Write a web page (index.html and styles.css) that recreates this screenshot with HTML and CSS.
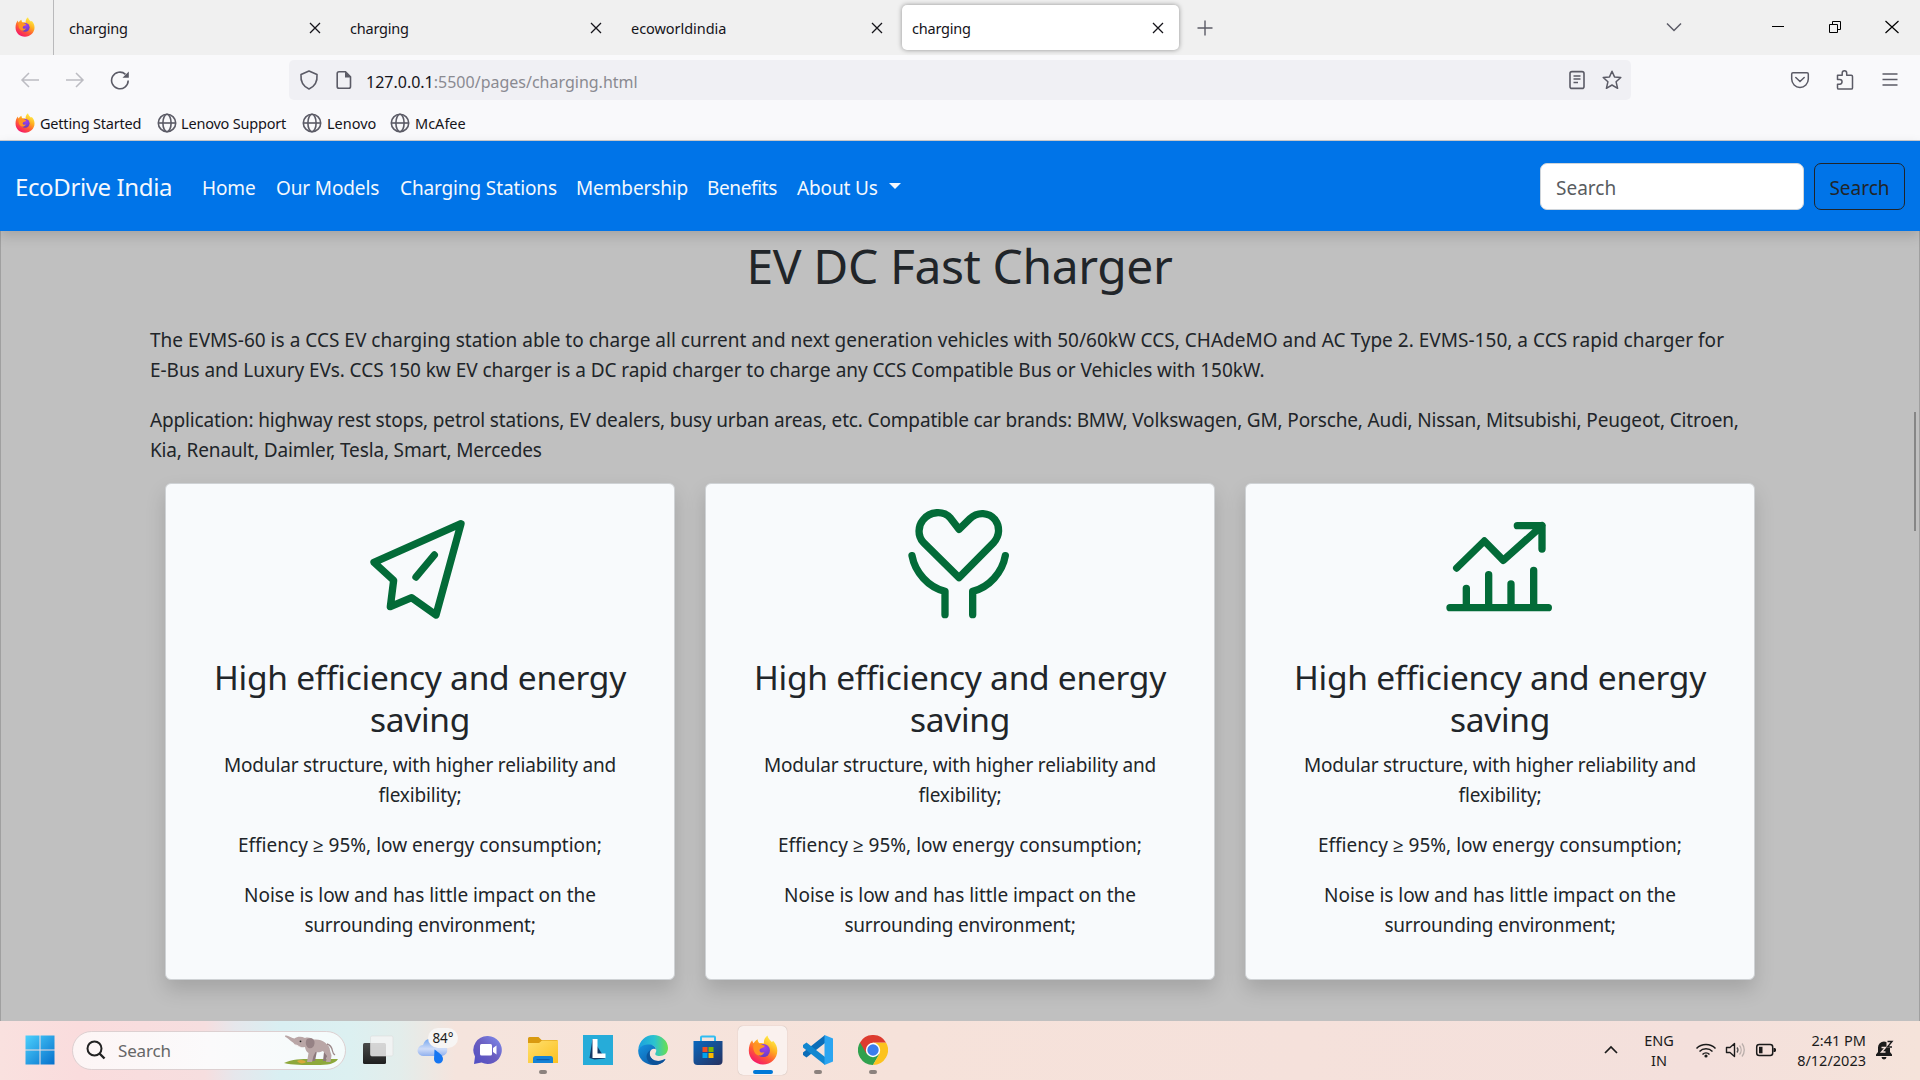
FILE: index.html
```html
<!DOCTYPE html>
<html lang="en">
<head>
<meta charset="utf-8">
<title>charging</title>
<link rel="stylesheet" href="styles.css">
</head>
<body>
<svg class="defs" width="0" height="0" aria-hidden="true">
  <defs>
    <linearGradient id="fx-body" x1="0.85" y1="0.1" x2="0.3" y2="1"><stop offset="0" stop-color="#fff04a"/><stop offset=".35" stop-color="#ffae1f"/><stop offset=".65" stop-color="#ff5a36"/><stop offset="1" stop-color="#f5156c"/></linearGradient>
    <radialGradient id="fx-core" cx=".6" cy=".3" r=".8"><stop offset="0" stop-color="#a13df0"/><stop offset="1" stop-color="#5a3fb8"/></radialGradient>
    <linearGradient id="win" x1="0" y1="0" x2="1" y2="1"><stop offset="0" stop-color="#4cd0fc"/><stop offset="1" stop-color="#0670cc"/></linearGradient>
    <linearGradient id="edge-a" x1="0" y1="0" x2="1" y2="0"><stop offset="0" stop-color="#1ba0e0"/><stop offset=".55" stop-color="#2cc3cf"/><stop offset="1" stop-color="#6be04c"/></linearGradient>
    <linearGradient id="edge-b" x1="0" y1="0" x2="1" y2="1"><stop offset="0" stop-color="#1593e0"/><stop offset="1" stop-color="#0b4e9c"/></linearGradient>
    <linearGradient id="store" x1="0" y1="0" x2="1" y2="1"><stop offset="0" stop-color="#0a68bf"/><stop offset="1" stop-color="#26315f"/></linearGradient>
    <linearGradient id="chat" x1="0" y1="1" x2="1" y2="0"><stop offset="0" stop-color="#4f4ec4"/><stop offset=".5" stop-color="#6a5dc0"/><stop offset="1" stop-color="#7f8ff0"/></linearGradient>
    <linearGradient id="folder" x1="0" y1="0" x2="1" y2="1"><stop offset="0" stop-color="#ffdf6f"/><stop offset="1" stop-color="#fbc11f"/></linearGradient>
    <linearGradient id="cloud" x1="0" y1="0" x2="0" y2="1"><stop offset="0" stop-color="#6fa3ee"/><stop offset=".6" stop-color="#cfdcf8"/><stop offset="1" stop-color="#8fb0ee"/></linearGradient>
    <linearGradient id="dark" x1="0" y1="0" x2="0" y2="1"><stop offset="0" stop-color="#4a4a4a"/><stop offset="1" stop-color="#1f1f1f"/></linearGradient>
    <symbol id="firefox" viewBox="0 0 30 30">
      <path d="M15 29.5C7 29.5.8 23.6.8 15.6c0-4 1.2-8 3.4-10.400.3 1.500.8 2.300 1.500 3C6.600 6.500 8 5 9.700 4.200c0 1.800.6 3 1.800 4 1.600-.4 3.200-.3 4.500.3C15.500 5.500 16.800 2.500 19.500.5c.6 2.800 2.200 4.300 4.300 6.400l1.500-.9c2.700 2.800 4 6 4 9.800 0 7.800-6.300 13.700-14.300 13.700z" fill="url(#fx-body)"/>
      <circle cx="15.300" cy="15.500" r="6.600" fill="url(#fx-core)"/>
      <path d="M5.500 9.500c2-1.300 4.500-1.600 6.500-.7 1.600.8 3 1.700 4.800 2-.4 1.700-2.300 2.200-3.700 2.700-1.600.6-1.900 2.200-1 3.300 1 1.200 3 .9 4.300.2-1 3-4.400 4.300-7.200 3-3.300-1.500-4.600-6.500-3.700-10.500z" fill="#ff9322"/>
    </symbol>
    <symbol id="globe" viewBox="0 0 20 20"><g fill="none" stroke="#5b5b66" stroke-width="1.600"><circle cx="10" cy="10" r="8.700"/><ellipse cx="10" cy="10" rx="4.100" ry="8.700"/><path d="M1.500 10h17"/></g></symbol>
    <symbol id="close" viewBox="0 0 12 12"><path d="M1 1l10 10M11 1L1 11" fill="none" stroke="#15141a" stroke-width="1.300"/></symbol>
  </defs>
</svg>

<header class="browser">
  <div class="tabs">
    <div class="pinned"><svg width="20" height="20"><use href="#firefox"/></svg></div>
    <div class="tab"><span>charging</span><svg width="12" height="12"><use href="#close"/></svg></div>
    <div class="tab"><span>charging</span><svg width="12" height="12"><use href="#close"/></svg></div>
    <div class="tab wide"><span>ecoworldindia</span><svg width="12" height="12"><use href="#close"/></svg></div>
    <div class="tab active"><span>charging</span><svg width="12" height="12"><use href="#close"/></svg></div>
    <svg class="new-tab" width="16" height="16" viewBox="0 0 16 16"><path d="M8 .5v15M.5 8h15" stroke="#5b5b66" stroke-width="1.400"/></svg>
    <div class="window-buttons">
      <svg width="16" height="16" viewBox="0 0 16 16"><path d="M1 4.500l7 7 7-7" fill="none" stroke="#5b5b66" stroke-width="1.500"/></svg>
      <svg class="min" width="14" height="14" viewBox="0 0 14 14"><path d="M1 6.500h12" stroke="#000"/></svg>
      <svg width="14" height="14" viewBox="0 0 14 14"><path d="M1.500 4.500h8v8h-8zM4.500 4.500v-3h8v8h-3" fill="none" stroke="#000"/></svg>
      <svg width="14" height="14" viewBox="0 0 14 14"><path d="M.5 1l13 12M13.500 1L.5 13" stroke="#000" stroke-width="1.200"/></svg>
    </div>
  </div>

  <div class="toolbar">
    <div class="history">
      <svg width="20" height="20" viewBox="0 0 20 20"><path d="M19 10H2M9 3l-7 7 7 7" fill="none" stroke="#bcbcc2" stroke-width="1.500"/></svg>
      <svg width="20" height="20" viewBox="0 0 20 20"><path d="M1 10h17M11 3l7 7-7 7" fill="none" stroke="#bcbcc2" stroke-width="1.500"/></svg>
      <svg width="20" height="20" viewBox="0 0 20 20"><path d="M18.200 10.500A8.300 8.300 0 1 1 15.500 4.300" fill="none" stroke="#5b5b66" stroke-width="1.600"/><path d="M18.800 1.500v6.300h-6.300z" fill="#5b5b66"/></svg>
    </div>
    <div class="urlbar">
      <svg width="20" height="20" viewBox="0 0 20 20"><path d="M10 1l8 3.600c.5 6-2.200 11.800-8 14.400C4.200 16.400 1.500 10.600 2 4.600z" fill="none" stroke="#5b5b66" stroke-width="1.600" stroke-linejoin="round"/></svg>
      <svg width="20" height="20" viewBox="0 0 20 20"><path d="M5 1.800h6.500l5 5V16.500a1.800 1.800 0 0 1-1.800 1.800H5a1.800 1.800 0 0 1-1.800-1.800V3.600A1.800 1.800 0 0 1 5 1.800z" fill="none" stroke="#5b5b66" stroke-width="1.600"/><path d="M11 1.500v6h6z" fill="#5b5b66"/></svg>
      <span class="url"><b>127.0.0.1</b>:5500/pages/charging.html</span>
      <svg width="20" height="20" viewBox="0 0 20 20"><rect x="3" y="1.600" width="14" height="16.800" rx="2" fill="none" stroke="#5b5b66" stroke-width="1.600"/><path d="M6.500 6h7M6.500 9h7M6.500 12.500h4.500" stroke="#5b5b66" stroke-width="1.400"/></svg>
      <svg width="20" height="20" viewBox="0 0 20 20"><path d="M10 1.200l2.500 5.700 6.300.6-4.700 4.300 1.500 6.500L10 15l-5.600 3.300 1.500-6.500L1.200 7.500l6.300-.6z" fill="none" stroke="#5b5b66" stroke-width="1.500" stroke-linejoin="round"/></svg>
    </div>
    <div class="tools">
      <svg width="20" height="20" viewBox="0 0 20 20"><path d="M3 2.800h14c.8 0 1.300.5 1.300 1.300v5a8.300 8.300 0 0 1-16.600 0v-5c0-.8.5-1.300 1.300-1.300z" fill="none" stroke="#5b5b66" stroke-width="1.500"/><path d="M5.800 7.500L10 11.500l4.200-4" fill="none" stroke="#5b5b66" stroke-width="1.500" stroke-linecap="round"/></svg>
      <svg width="20" height="20" viewBox="0 0 20 20"><path d="M2.500 5.200h4.700V3a2.200 2.200 0 0 1 4.500 0v2.200h4.600c.7 0 1.200.5 1.200 1.200v11.500c0 .7-.5 1.200-1.200 1.200H3.700c-.7 0-1.200-.5-1.200-1.200v-3.700h2.200a2.300 2.300 0 0 0 0-4.700H2.500z" fill="none" stroke="#5b5b66" stroke-width="1.500" stroke-linejoin="round"/></svg>
      <svg width="20" height="20" viewBox="0 0 20 20"><path d="M2.500 4h15M2.500 9.500h15M2.500 15h15" stroke="#5b5b66" stroke-width="1.400"/></svg>
    </div>
  </div>

  <nav class="bookmarks">
    <a class="bm bm-start"><svg width="20" height="20"><use href="#firefox"/></svg><span>Getting Started</span></a>
    <a class="bm bm-support"><svg width="20" height="20"><use href="#globe"/></svg><span>Lenovo Support</span></a>
    <a class="bm"><svg width="20" height="20"><use href="#globe"/></svg><span>Lenovo</span></a>
    <a class="bm"><svg width="20" height="20"><use href="#globe"/></svg><span>McAfee</span></a>
  </nav>
</header>

<nav class="navbar">
  <a class="brand">EcoDrive India</a>
  <ul class="links">
    <li>Home</li>
    <li>Our Models</li>
    <li>Charging Stations</li>
    <li>Membership</li>
    <li class="tight">Benefits</li>
    <li class="dropdown">About Us</li>
  </ul>
  <form class="search">
    <input type="text" placeholder="Search">
    <button type="button">Search</button>
  </form>
</nav>

<main class="page">
  <h1>EV DC Fast Charger</h1>
  <div class="intro">
    <p class="about"><span>The EVMS-60 is a CCS EV charging station able to charge all current and next generation vehicles with 50/60kW CCS, CHAdeMO and AC Type 2. EVMS-150, a CCS rapid charger for</span><br>E-Bus and Luxury EVs. CCS 150 kw EV charger is a DC rapid charger to charge any CCS Compatible Bus or Vehicles with 150kW.</p>
    <p class="usage">Application: highway rest stops, petrol stations, EV dealers, busy urban areas, etc. Compatible car brands: BMW, Volkswagen, GM, Porsche, Audi, Nissan, Mitsubishi, Peugeot, Citroen,<br>Kia, Renault, Daimler, Tesla, Smart, Mercedes</p>
  </div>
  <div class="cards">
    <article class="card">
      <svg class="card-icon" viewBox="0 0 480 450"><path d="M363 101L102 217l59 54-10 79 64-27 73 52zM283 195l-55 66"/></svg>
      <h2>High efficiency and energy<br>saving</h2>
      <p class="structure">Modular structure, with higher reliability and<br>flexibility;</p>
      <p>Effiency ≥ 95%, low energy consumption;</p>
      <p class="noise">Noise is low and has little impact on the<br><span>surrounding environment;</span></p>
    </article>
    <article class="card">
      <svg class="card-icon" viewBox="0 0 480 450"><path d="M237 263L130 157C112 137 114 108 129 90c21-27 61-29 82-6l26 34 33-32c23-22 57-19 75 3 15 20 15 47-4 69zM96 197c9 50 49 95 99 107v70M376 197c-9 50-48 95-98 107v70"/></svg>
      <h2>High efficiency and energy<br>saving</h2>
      <p class="structure">Modular structure, with higher reliability and<br>flexibility;</p>
      <p>Effiency ≥ 95%, low energy consumption;</p>
      <p class="noise">Noise is low and has little impact on the<br><span>surrounding environment;</span></p>
    </article>
    <article class="card">
      <svg class="card-icon" viewBox="0 0 480 450"><path d="M110 234l83-81 57 58L366 107M292 107h74v70M90 353h295M139 353v-58M206 353V254M273 353v-71M341 353V241"/></svg>
      <h2>High efficiency and energy<br>saving</h2>
      <p class="structure">Modular structure, with higher reliability and<br>flexibility;</p>
      <p>Effiency ≥ 95%, low energy consumption;</p>
      <p class="noise">Noise is low and has little impact on the<br><span>surrounding environment;</span></p>
    </article>
  </div>
  <div class="scroll-thumb"></div>
</main>

<footer class="taskbar">
  <div class="app start"><svg width="30" height="30" viewBox="0 0 30 30"><path d="M.5.500h14v14H.5zM15.500.500h14v14h-14zM.5 15.500h14v14H.5zM15.500 15.500h14v14h-14z" fill="url(#win)"/></svg></div>
  <div class="pill">
    <svg width="20" height="20" viewBox="0 0 20 20"><circle cx="8.500" cy="8.500" r="7" fill="none" stroke="#222" stroke-width="2"/><path d="M13.500 13.500l5 5" stroke="#222" stroke-width="2.400"/></svg>
    <span>Search</span>
    <svg class="elephant" width="56" height="32" viewBox="0 0 56 32">
      <path d="M1 29c8-4 17-4 27-4 12 0 22 0 27 0-3 5-10 6-22 6-13 0-24 0-32-2z" fill="#8da83c"/>
      <path d="M14 27c3-2 8-1 9 1-2 2-7 2-9-1z" fill="#d9a93a"/>
      <path d="M28 18l6-1-2 10h-4zM41 18l4 0-2 9h-3z" fill="#8c787b"/>
      <path d="M2.500 1.200C6 1.700 9 4 11.500 4.500 14 2.500 18 2 22 4c3-1 6 0 9 1.500 4-.5 8 .5 11 3 3 2.500 5 5 5 8l1.500 5-1 6.500H43l1-6-4-5c-3 1.500-5 1.500-7.500 1l-2 4-1.500 6h-5l1.500-9c-2-1-3-3-3.500-6-5 1-9-.5-12-4.500C7 6.500 4.500 4 2 2.800z" fill="#b9a6a6"/>
      <path d="M24 5c4-2 8 0 7.500 4.500-.5 4-3 5.500-6 4.500-3-2-3.500-6.500-1.500-9z" fill="#968285"/>
      <path d="M12 10l6 3-4-.500z" fill="#fff"/><circle cx="17.500" cy="7.300" r=".9" fill="#222"/>
      <path d="M44 10c4 1 5 4 5.500 7 .3 2 1 3 2.500 4" fill="none" stroke="#9d898a" stroke-width="1.300"/>
    </svg>
  </div>
  <div class="app"><svg width="32" height="30" viewBox="0 0 32 30"><rect x="1" y="8" width="23" height="21" rx="1.500" fill="url(#dark)"/><rect x="8.500" y="1" width="22.500" height="20" rx="1.500" fill="#f4f4f4" fill-opacity=".82" stroke="#dcdcdc" stroke-width=".6"/></svg></div>
  <div class="app weather">
    <svg width="32" height="32" viewBox="0 0 32 32"><path d="M7 22a6 5.500 0 0 1-1-11C7.500 6 11 4 14.500 5c3.500-2 8 0 9 5a6 6 0 0 1 1.500 12z" fill="url(#cloud)"/><path d="M17.500 15.500c4 3 8.500 5.500 8.500 9.500a4.500 4.500 0 0 1-9 0z" fill="#1576f2"/></svg>
    <span class="temp">84°</span>
  </div>
  <div class="app"><svg width="30" height="30" viewBox="0 0 30 30"><path d="M15 1a14 14 0 1 1-6.500 26.500L1 29l1-7.500A14 14 0 0 1 15 1z" fill="url(#chat)"/><rect x="7" y="9" width="12" height="11.500" rx="1.500" fill="#fff"/><path d="M20 13l3.500-2.500v9L20 17z" fill="#fff"/></svg></div>
  <div class="app open"><svg width="30" height="30" viewBox="0 0 30 30"><path d="M0 3.500A1.500 1.500 0 0 1 1.500 2h9l3 3H28.500A1.500 1.500 0 0 1 30 6.500V10H0z" fill="#d99a10"/><path d="M0 8h11l3-2.500h16V28H0z" fill="url(#folder)"/><path d="M5 28v-4.500A2.500 2.500 0 0 1 7.500 21h15a2.500 2.500 0 0 1 2.500 2.500V28z" fill="#1482d6"/><path d="M8.500 24.700h13" stroke="#0b57a4"/></svg></div>
  <div class="app"><span class="lenovo"><svg width="30" height="30" viewBox="0 0 30 30"><path d="M9.500 4l-3 19 5 1.500L22 23.500z" fill="#123a68"/><path d="M9.500 4h5v14.500h8V23h-13z" fill="#fff"/></svg></span></div>
  <div class="app"><svg width="30" height="30" viewBox="0 0 30 30"><path d="M.3 14C1.300 6 7.500 0 15.300 0 23.500 0 30 6 30 13c0 5-3.500 8-8.500 8-3 0-5-1-4-3 2-3 0-8-6-8-5 0-9 2-11.200 4z" fill="url(#edge-a)"/><path d="M.3 14.500C2.500 10.500 7 9.500 11 9.500c3.500 0 6.500 2 7 5-1.500-1.500-5-1-6 2.500-1.500 6 5 10.500 11 8.500 2-.6 4-1.700 4.500-1.500C25.500 28 20.500 30 15.500 30 6.500 30-.7 23 .3 14.500z" fill="url(#edge-b)"/><path d="M12.500 15c-3 6 2 12 9.500 11 3-.5 5-1.700 5.500-2-2 3.500-6 6-11 6-7-1-11.500-10-4-15z" fill="#0d4f94" opacity=".8"/></svg></div>
  <div class="app"><svg width="30" height="30" viewBox="0 0 30 30"><path d="M8 7V2.500A1 1 0 0 1 9 1.500h12a1 1 0 0 1 1 1V7" fill="none" stroke="#30bdf2" stroke-width="2"/><path d="M.5 6h29v20a4 4 0 0 1-4 4h-21a4 4 0 0 1-4-4z" fill="url(#store)"/><path d="M9.500 12H14.500v5h-5z" fill="#f25022"/><path d="M15.500 12h5v5h-5z" fill="#7fba00"/><path d="M9.500 18h5v5h-5z" fill="#00a4ef"/><path d="M15.500 18h5v5h-5z" fill="#ffb900"/></svg></div>
  <div class="app open current"><svg width="30" height="30"><use href="#firefox"/></svg></div>
  <div class="app open"><svg width="30" height="30" viewBox="0 0 30 30"><path d="M22 0v8L3.500 22.500 0 20v-2.500z" fill="#0b6db8"/><path d="M22 30v-8L3.500 7.500 0 10v2.500z" fill="#1187d0"/><path d="M21.500 0L30 3.500v23L21.500 30z" fill="#2ba5f1"/></svg></div>
  <div class="app open"><svg width="30" height="30" viewBox="0 0 30 30"><path d="M15 15L2 7.500A15 15 0 0 0 15 30l6.500-11z" fill="#30a14e"/><path d="M15 15V7.500h13A15 15 0 0 1 15 30l6.500-11.200z" fill="#fcc31e"/><path d="M2 7.500a15 15 0 0 1 26 0H15L8.500 18.800z" fill="#dd3b2f"/><circle cx="15" cy="15" r="7.200" fill="#fff"/><circle cx="15" cy="15" r="5.700" fill="#3b7ded"/></svg></div>

  <div class="tray">
    <svg class="tray-up" width="14" height="14" viewBox="0 0 14 14"><path d="M1 10l6-6 6 6" fill="none" stroke="#1b1b1b" stroke-width="1.700"/></svg>
    <div class="lang"><span>ENG</span><span>IN</span></div>
    <svg class="wifi" width="22" height="20" viewBox="0 0 22 20"><g fill="none" stroke="#1b1b1b" stroke-width="1.500"><path d="M1.500 8.500a13.500 13.500 0 0 1 19 0M4.500 11.500a9.200 9.200 0 0 1 13 0M7.500 14.500a5 5 0 0 1 7 0"/></g><circle cx="11" cy="16" r="1.600" fill="#1b1b1b"/></svg>
    <svg class="sound" width="22" height="20" viewBox="0 0 22 20"><path d="M1.500 7.500h3.500L9.500 3.500v13L5 12.500H1.500z" fill="none" stroke="#1b1b1b" stroke-width="1.400" stroke-linejoin="round"/><path d="M12 7.500a4 4 0 0 1 0 5" fill="none" stroke="#555" stroke-width="1.300"/><path d="M14.500 5.500a7 7 0 0 1 0 9M17 3.500a10.500 10.500 0 0 1 0 13" fill="none" stroke="#b9aeaa" stroke-width="1.300"/></svg>
    <svg class="battery" width="22" height="20" viewBox="0 0 22 20"><rect x="1.700" y="4.500" width="16" height="11" rx="2.500" fill="none" stroke="#1b1b1b" stroke-width="1.500"/><rect x="4" y="6.800" width="3.500" height="6.500" fill="#1b1b1b"/><path d="M18.500 8h1.500l1 1v2l-1 1h-1.500z" fill="#1b1b1b"/></svg>
    <div class="clock"><span>2:41 PM</span><span>8/12/2023</span></div>
    <svg class="bell" width="20" height="20" viewBox="0 0 20 20"><path d="M9 1.500a6 6 0 0 1 6 6v4.500l2 2.500v1.500H1v-1.500l2-2.500V7.500a6 6 0 0 1 6-6z" fill="#1b1b1b"/><path d="M6.500 17h5a2.500 2.500 0 0 1-5 0z" fill="#1b1b1b"/><path d="M6.500 7.500h4L6.500 12h4" fill="none" stroke="#f5e2dc" stroke-width="1.400"/><path d="M11.500 0h7.500v8h-7.500z" fill="#f5e2dc"/><path d="M12.500 1.500h4.500L12.500 7H17" fill="none" stroke="#1b1b1b" stroke-width="1.400"/></svg>
  </div>
</footer>
</body>
</html>
```
FILE: styles.css
```css
* { box-sizing: border-box; }

body {
  margin: 0;
  width: 1920px;
  height: 1080px;
  overflow: hidden;
  display: flex;
  flex-direction: column;
  font-family: "Noto Sans", "Open Sans", sans-serif;
  font-size: 19px;
  color: #212529;
  white-space: nowrap;
}

svg { display: block; flex: none; }
.defs { position: absolute; }

/* Browser chrome */
.browser {
  height: 141px;
  flex: none;
  background: #f9f9fb;
  border-bottom: 1px solid #cccccf;
  color: #15141a;
  font-size: 14.500px;
}

.tabs {
  display: flex;
  align-items: center;
  height: 55px;
  background: #f0f0f0;
}

.pinned {
  width: 54px;
  height: 55px;
  padding: 17px 0 0 15px;
  border-right: 1px solid #b9b9bb;
}

.tab {
  display: flex;
  align-items: center;
  justify-content: space-between;
  width: 277px;
  height: 45px;
  margin: 0 4px 0 0;
  padding: 0 15px 0 10px;
  border-radius: 5px;
  letter-spacing: -.2px;
}
.tab.wide { letter-spacing: -.05px; }
.pinned + .tab { margin-left: 5px; }
.tab.active {
  background: #fff;
  box-shadow: 0 0 5px rgba(0, 0, 0, .4);
}
.new-tab { margin-left: 14px; }

.window-buttons {
  display: flex;
  align-items: center;
  gap: 43px;
  margin-left: auto;
  padding: 0 21px 2px 0;
}
.window-buttons .min { margin-left: 46px; }

.toolbar {
  display: flex;
  align-items: center;
  height: 50px;
}
.history {
  display: flex;
  gap: 25px;
  width: 289px;
  padding-left: 20px;
}
.urlbar {
  display: flex;
  align-items: center;
  gap: 15px;
  width: 1342px;
  height: 40px;
  padding: 0 9px 0 10px;
  border-radius: 5px;
  background: #f0f0f4;
  font-size: 16px;
}
.url { flex: 1; margin-left: -3px; padding-top: 3px; color: #8a8a91; }
.url b { font-weight: 400; color: #15141a; }
.tools {
  display: flex;
  gap: 25px;
  margin-left: auto;
  padding-right: 20px;
}

.bookmarks {
  display: flex;
  align-items: center;
  height: 36px;
  padding-left: 15px;
}
.bm { display: flex; align-items: center; gap: 5px; width: 88px; }
.bm-start { width: 142px; letter-spacing: -.2px; }
.bm-support { width: 145px; gap: 4px; letter-spacing: -.2px; }

/* Site navigation */
.navbar {
  position: relative;
  z-index: 1;
  display: flex;
  align-items: center;
  flex: none;
  height: 90px;
  padding: 1px 15px 0;
  background: #0074e8;
  box-shadow: 0 5px 12px rgba(0, 0, 0, .15);
  color: #f4f8fd;
}
.brand { width: 187px; font-size: 24px; letter-spacing: -.38px; }
.links {
  display: grid;
  grid-template-columns: 74px 124px 176px 131px 90px auto;
  margin: 0;
  padding: 3px 0 0;
  list-style: none;
  letter-spacing: -.13px;
}
.links .tight { letter-spacing: -.35px; }
.dropdown { display: flex; align-items: center; gap: 11px; }
.dropdown::after {
  content: "";
  margin-top: -4px;
  border: 6px solid transparent;
  border-top-color: #f4f8fd;
  border-bottom: 0;
}
.search { display: flex; gap: 10px; margin-left: auto; }
.search input,
.search button {
  height: 47px;
  border-radius: 7px;
  font: inherit;
}
.search input {
  width: 264px;
  padding: 3px 15px 0;
  border: 1px solid #ced4da;
  background: #fff;
}
.search input::placeholder { color: #595c5f; opacity: 1; }
.search button {
  width: 91px;
  padding: 3px 0 0;
  border: 1px solid #212529;
  background: transparent;
  color: #212529;
}

/* Page content */
.page {
  position: relative;
  flex: none;
  height: 790px;
  padding: 5px 150px 0 149px;
  background: #c0c0c0;
  border-left: 1px solid #a0a0a0;
  border-right: 1px solid #a0a0a0;
}
h1 {
  margin: 0;
  text-align: center;
  font-size: 48px;
  font-weight: 400;
  line-height: 60px;
  letter-spacing: -.4px;
}
.intro { padding-top: 29px; }
p { margin: 0 0 20px; line-height: 30px; }
.about { letter-spacing: -.05px; }
.about span { letter-spacing: .02px; }
.usage { letter-spacing: -.15px; }

.cards { display: grid; grid-template-columns: repeat(3, 510px); gap: 30px; padding-left: 15px; margin-top: -2px; }
.card {
  height: 497px;
  padding-top: 6px;
  border: 1px solid #cfd2d5;
  border-radius: 6px;
  background: #f8fafc;
  box-shadow: 0 10px 20px rgba(0, 0, 0, .15);
  text-align: center;
}
.card-icon {
  width: 160px;
  height: 150px;
  margin: 0 auto 16px;
  fill: none;
  stroke: #036b38;
  stroke-width: 22px;
  stroke-linecap: round;
  stroke-linejoin: round;
}
h2 {
  margin: 0 0 10px;
  font-size: 33.500px;
  font-weight: 400;
  line-height: 42px;
  letter-spacing: -.26px;
}
.structure { letter-spacing: -.16px; }
.noise { letter-spacing: -.04px; }
.noise span { letter-spacing: -.2px; }

.scroll-thumb {
  position: absolute;
  top: 181px;
  right: 3px;
  width: 2px;
  height: 119px;
  background: #868686;
}

/* Desktop taskbar */
.taskbar {
  display: flex;
  align-items: center;
  flex: none;
  height: 59px;
  padding: 0 0 1px 12px;
  background: linear-gradient(90deg, #f9e1df 0, #fadcdd 80px, #f6dedf 205px, #e6e7ec 235px, #d9eff2 280px, #dcf0f1 350px, #e3edeb 400px, #f5e4dd 455px, #f6e2da 900px, #f4e0dc 1700px, #f5e3da 1920px);
  color: #1b1b1b;
}
.app {
  position: relative;
  display: flex;
  align-items: center;
  justify-content: center;
  flex: none;
  width: 55px;
  height: 58px;
}
.app.open::after {
  content: "";
  position: absolute;
  bottom: 5px;
  left: 23.500px;
  width: 8px;
  height: 4px;
  border-radius: 2px;
  background: #8c827e;
}
.app.current {
  width: 49px;
  height: 49px;
  margin: 0 3px;
  border-radius: 5px;
  background: #faf1ee;
  box-shadow: 0 0 1px rgba(0, 0, 0, .3);
}
.app.current::after {
  left: 14.500px;
  bottom: 1px;
  width: 20px;
  background: #0078d7;
}
.pill {
  display: flex;
  align-items: center;
  width: 274px;
  height: 39px;
  margin: 0 4px 0 5px;
  padding: 0 6px 0 13px;
  border: 1px solid #ddd0d1;
  border-radius: 20px;
  background: linear-gradient(90deg, #fdf5f5, #fbfafb 50%, #f4fbfb);
  font-size: 17px;
  color: #666;
}
.pill span { flex: 1; padding-left: 12px; letter-spacing: -.15px; }
.temp {
  position: absolute;
  top: 7px;
  left: 23px;
  width: 30px;
  height: 20px;
  border-radius: 10px;
  background: #f7f5f4;
  font-size: 13.500px;
  line-height: 20px;
  text-align: center;
}
.lenovo { background: #26acd9; }

.tray {
  display: flex;
  align-items: center;
  margin-left: auto;
  padding-right: 25px;
  font-size: 14.500px;
  line-height: 20px;
}
.lang, .clock { display: flex; flex-direction: column; }
.lang { width: 56px; margin: 0 8px 0 13px; align-items: center; }
.wifi { margin-right: 8px; }
.sound { margin-right: 8px; }
.clock { width: 89px; margin-right: 9px; align-items: flex-end; }
```
